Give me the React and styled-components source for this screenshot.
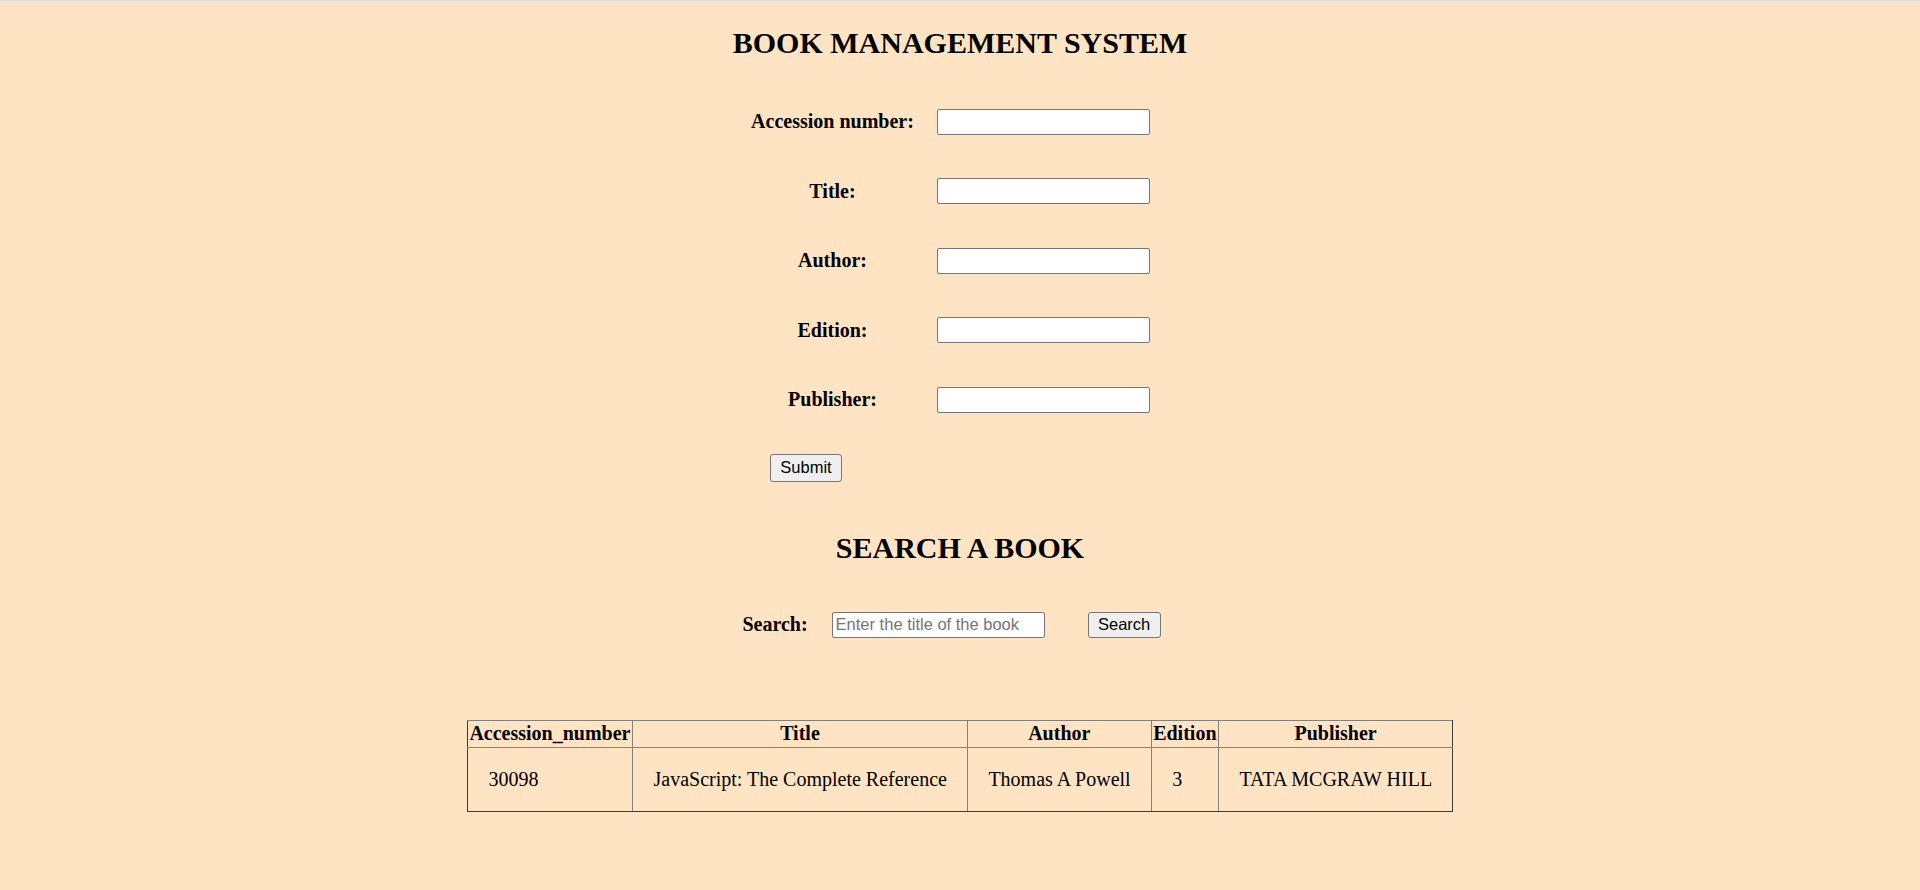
import styled, { createGlobalStyle } from "styled-components";
import { useState, Fragment } from "react";

const GlobalStyle = createGlobalStyle`
  * {
    box-sizing: border-box;
  }
  html, body {
    margin: 0;
    padding: 0;
    background: #ffe4c4;
  }
  body {
    font-family: "Liberation Serif", "Times New Roman", serif;
    color: #000;
  }
`;

const Page = styled.div`
  min-height: 100vh;
  border-top: 1px solid #dddddd;
  padding-bottom: 40px;
`;

const Heading = styled.h2`
  margin: ${(p) => p.$top}px 0 0;
  font-size: 30px;
  font-weight: bold;
  line-height: 34.5px;
  text-align: center;
`;

const Form = styled.form`
  display: grid;
  grid-template-columns: 185px 213px;
  column-gap: 12px;
  row-gap: 43.5px;
  align-items: center;
  width: 410px;
  margin: 48px 0 0 calc(50% - 220px);
`;

const Label = styled.label`
  font-size: 20px;
  font-weight: bold;
  text-align: center;
  line-height: 23px;
`;

const Input = styled.input`
  width: 213px;
  height: 26px;
  padding: 0 3px;
  border: 1px solid #767676;
  border-radius: 2px;
  background: #fff;
  font-family: "Liberation Sans", Arial, sans-serif;
  font-size: 16.5px;
  color: #000;
  &::placeholder {
    color: #757575;
  }
`;

const Button = styled.button`
  width: ${(p) => p.$w}px;
  height: ${(p) => p.$h}px;
  padding: 0;
  border: 1px solid #767676;
  border-radius: 3px;
  background: #efefef;
  font-family: "Liberation Sans", Arial, sans-serif;
  font-size: 16.5px;
  color: #000;
  cursor: pointer;
  &:hover {
    background: #e5e5e5;
  }
`;

const SubmitCell = styled.div`
  grid-column: 1 / 2;
  margin-top: -2.5px;
  padding-left: 30px;
`;

const SearchRow = styled.div`
  display: flex;
  align-items: center;
  justify-content: center;
  margin-top: 46px;
  padding-right: 17px;
`;

const SearchLabel = styled(Label)`
  margin-right: 24px;
`;

const SearchInput = styled(Input)`
  margin-right: 43px;
`;

const Table = styled.table`
  margin: 82.5px auto 0;
  border-collapse: collapse;
  font-size: 20px;

  tr > *:first-child {
    border-left-color: #3c3c3c;
  }
  tr > *:last-child {
    border-right-color: #3c3c3c;
  }
  tbody tr:last-child td {
    border-bottom-color: #3c3c3c;
  }
`;

const Th = styled.th`
  padding: 1px 1.5px 2px;
  border: 1px solid #808080;
  border-left-color: ${(p) => (p.$dark ? "#3c3c3c" : "#808080")};
  font-weight: bold;
  line-height: 23px;
  text-align: center;
`;

const Td = styled.td`
  padding: 20px 20px 20px 20.5px;
  border: 1px solid #808080;
  border-left-color: ${(p) => (p.$dark ? "#3c3c3c" : "#808080")};
  font-weight: normal;
  line-height: 23px;
  text-align: left;
`;

const fields = [
  { id: "accession", label: "Accession number:" },
  { id: "title", label: "Title:" },
  { id: "author", label: "Author:" },
  { id: "edition", label: "Edition:" },
  { id: "publisher", label: "Publisher:" },
];

const books = [
  {
    accession: "30098",
    title: "JavaScript: The Complete Reference",
    author: "Thomas A Powell",
    edition: "3",
    publisher: "TATA MCGRAW HILL",
  },
];

const App = () => {
  const [values, setValues] = useState({});
  const [query, setQuery] = useState("");

  const handleChange = (id, value) => {
    setValues({ ...values, [id]: value });
  };

  return (
    <Page>
      <GlobalStyle />
      <Heading $top={25}>BOOK MANAGEMENT SYSTEM</Heading>

      <Form onSubmit={(e) => e.preventDefault()}>
        {fields.map((f) => (
          <Fragment key={f.id}>
            <Label htmlFor={f.id}>{f.label}</Label>
            <Input
              id={f.id}
              value={values[f.id] || ""}
              onChange={(e) => handleChange(f.id, e.target.value)}
            />
          </Fragment>
        ))}
        <SubmitCell>
          <Button type="submit" $w={72} $h={28}>
            Submit
          </Button>
        </SubmitCell>
      </Form>

      <Heading $top={49.5}>SEARCH A BOOK</Heading>

      <SearchRow>
        <SearchLabel htmlFor="search">Search:</SearchLabel>
        <SearchInput
          id="search"
          placeholder="Enter the title of the book"
          value={query}
          onChange={(e) => setQuery(e.target.value)}
        />
        <Button type="button" $w={73} $h={26}>
          Search
        </Button>
      </SearchRow>

      <Table>
        <thead>
          <tr>
            <Th>Accession_number</Th>
            <Th>Title</Th>
            <Th>Author</Th>
            <Th $dark>Edition</Th>
            <Th>Publisher</Th>
          </tr>
        </thead>
        <tbody>
          {books.map((b) => (
            <tr key={b.accession}>
              <Td>{b.accession}</Td>
              <Td>{b.title}</Td>
              <Td>{b.author}</Td>
              <Td $dark>{b.edition}</Td>
              <Td>{b.publisher}</Td>
            </tr>
          ))}
        </tbody>
      </Table>
    </Page>
  );
};

export default App;
